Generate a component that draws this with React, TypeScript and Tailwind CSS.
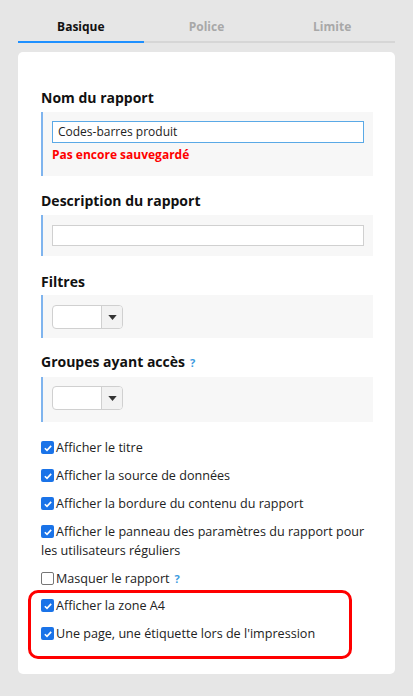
import React from 'react';

const Check = ({ checked }: { checked: boolean }) =>
  checked ? (
    <span className="mt-[3px] flex h-[13px] w-[13px] shrink-0 items-center justify-center rounded-[2px] bg-[#1a73e8]">
      <svg viewBox="0 0 12 12" className="h-[10px] w-[10px]">
        <path d="M2.2 6.3 L4.8 8.8 L9.8 3.4" fill="none" stroke="#fff" strokeWidth="2" />
      </svg>
    </span>
  ) : (
    <span className="mt-[3px] h-[13px] w-[13px] shrink-0 rounded-[2px] border border-[#767676] bg-white" />
  );

const Help = () => <span className="ml-[5px] text-[11px] font-bold leading-none text-[#3b9be0]">?</span>;

const Row = ({ checked, children }: { checked: boolean; children: React.ReactNode }) => (
  <div className="flex items-start gap-[2px] text-[12.6px] leading-[19px] text-[#222]">
    <Check checked={checked} />
    <span>{children}</span>
  </div>
);

const Select = () => (
  <div className="flex h-[24px] w-[71px] overflow-hidden rounded-[4px] border border-[#d0d0d0] bg-white">
    <div className="w-[49px] border-r border-[#d0d0d0]" />
    <div className="flex flex-1 items-center justify-center bg-[#f2f2f2]">
      <svg viewBox="0 0 10 6" className="h-[5px] w-[9px]">
        <path d="M0 0 H10 L5 6 Z" fill="#333" />
      </svg>
    </div>
  </div>
);

const Heading = ({ children, className = '' }: { children: React.ReactNode; className?: string }) => (
  <h2 className={`h-[20px] text-[14px] font-bold leading-[20px] text-[#111] ${className}`}>{children}</h2>
);

export default function App() {
  const tabs = ['Basique', 'Police', 'Limite'];
  return (
    <div className="min-h-[696px] bg-[#e6e6e6] px-[18px] pt-[10px] pb-[20px]" style={{ fontFamily: '"Open Sans", sans-serif' }}>
      <div className="flex border-b-2 border-[#d6d6d6]">
        {tabs.map((t, i) => (
          <div
            key={t}
            className={`-mb-[2px] flex h-[33px] flex-1 items-center justify-center border-b-2 pt-[2px] text-[12px] font-bold ${
              i === 0 ? 'border-[#1e90ff] text-[#111]' : 'border-transparent text-[#a8a8a8]'
            }`}
          >
            {t}
          </div>
        ))}
      </div>

      <div className="mt-[9px] rounded-[5px] bg-white pl-[23px] pr-[22px] pt-[36px] pb-[15px]">
        <Heading>Nom du rapport</Heading>
        <div className="mt-[4px] border-l-2 border-[#7fb4ee] bg-[#f7f7f7] pl-[9px] pr-[9px] pt-[9px] pb-[13px]">
          <div className="flex h-[22px] items-center border border-[#5aa9e6] bg-white px-[5px] text-[12px] text-[#222]">
            Codes-barres produit
          </div>
          <div className="mt-[4px] text-[12px] font-bold leading-[16px] text-[#ff0000]">Pas encore sauvegardé</div>
        </div>

        <Heading className="mt-[15px]">Description du rapport</Heading>
        <div className="mt-[4px] border-l-2 border-[#7fb4ee] bg-[#f7f7f7] px-[9px] py-[10px]">
          <div className="h-[21px] border border-[#d0d0d0] bg-white" />
        </div>

        <Heading className="mt-[16px]">Filtres</Heading>
        <div className="mt-[3px] border-l-2 border-[#7fb4ee] bg-[#f7f7f7] px-[9px] pt-[10px] pb-[9px]">
          <Select />
        </div>

        <Heading className="mt-[14px]">
          Groupes ayant accès
          <Help />
        </Heading>
        <div className="mt-[5px] border-l-2 border-[#7fb4ee] bg-[#f7f7f7] px-[9px] pt-[9px] pb-[12px]">
          <Select />
        </div>

        <div className="mt-[16px] flex flex-col gap-[9px]">
          <Row checked>Afficher le titre</Row>
          <Row checked>Afficher la source de données</Row>
          <Row checked>Afficher la bordure du contenu du rapport</Row>
          <div className="text-[12.6px] leading-[19px] text-[#222]">
            <span className="mr-[2px] inline-block h-[13px] w-[13px] translate-y-[2px] rounded-[2px] bg-[#1a73e8] align-baseline">
              <svg viewBox="0 0 12 12" className="m-[1.5px] h-[10px] w-[10px]">
                <path d="M2.2 6.3 L4.8 8.8 L9.8 3.4" fill="none" stroke="#fff" strokeWidth="2" />
              </svg>
            </span>
            Afficher le panneau des paramètres du rapport pour les utilisateurs réguliers
          </div>
          <Row checked={false}>
            Masquer le rapport
            <Help />
          </Row>
        </div>

        <div className="-ml-[13px] mt-[2px] flex w-[324px] flex-col gap-[9px] rounded-[10px] border-[3px] border-[#ff0000] pl-[10px] pt-[3px] pb-[13px]">
          <Row checked>Afficher la zone A4</Row>
          <Row checked>Une page, une étiquette lors de l'impression</Row>
        </div>
      </div>
    </div>
  );
}
